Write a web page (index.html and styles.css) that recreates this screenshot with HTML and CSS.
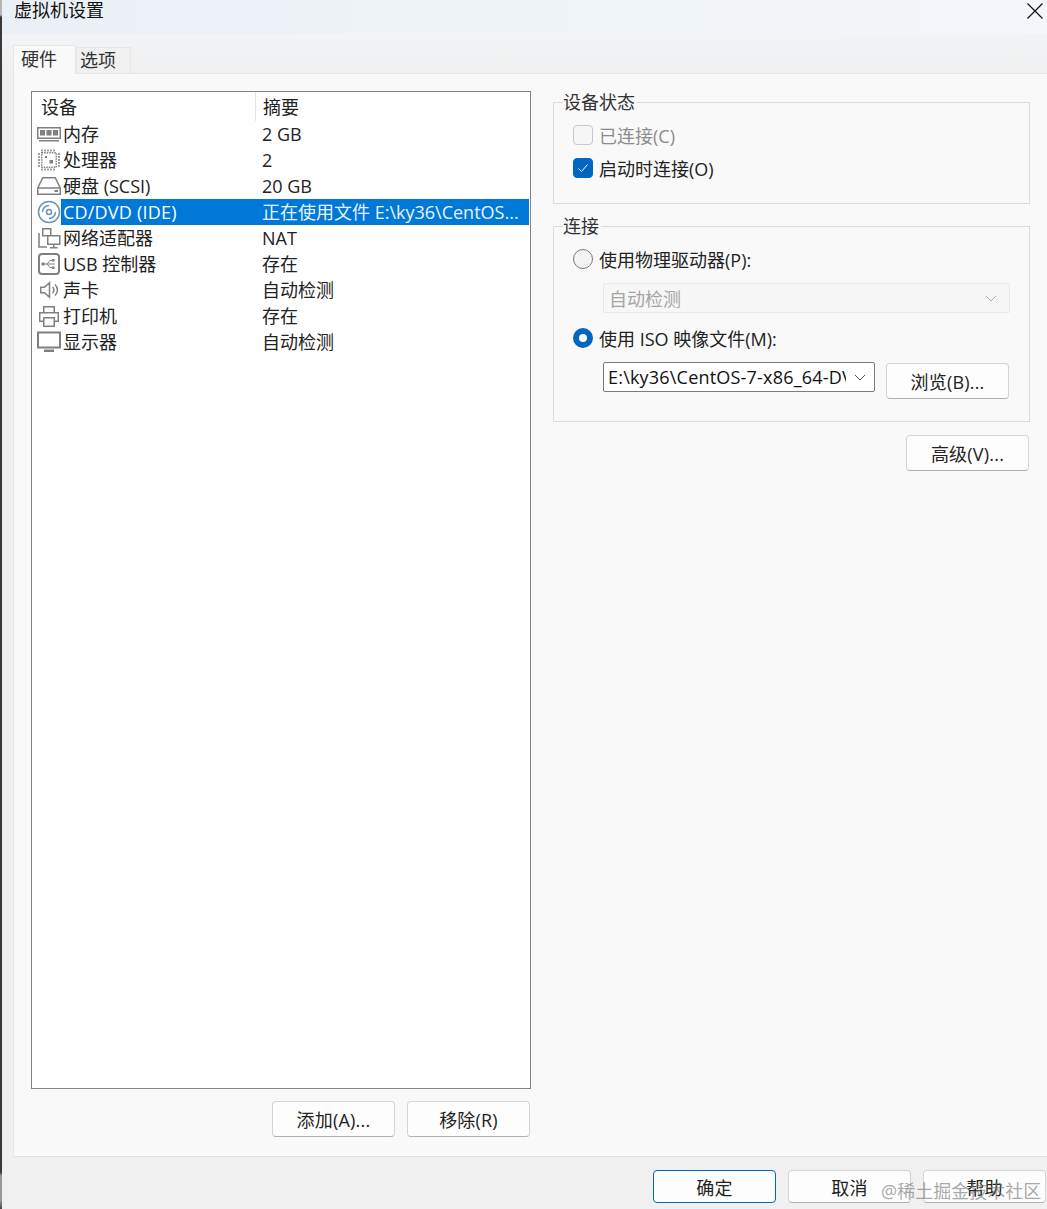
FILE: index.html
```html
<!DOCTYPE html>
<html lang="zh">
<head>
<meta charset="utf-8">
<title>虚拟机设置</title>
<link rel="stylesheet" href="styles.css">
</head>
<body>
<div class="edge"></div>
<div class="window">
  <header class="titlebar">
    <span class="title">虚拟机设置</span>
    <svg class="close" viewBox="0 0 16 16"><path d="M0.500 0.500L15.500 15.500M15.500 0.500L0.500 15.500"/></svg>
  </header>
  <div class="tabs">
    <div class="tab active">硬件</div>
    <div class="tab">选项</div>
  </div>
  <main class="panel">
    <section class="left">
      <div class="list">
        <div class="row head"><div class="c1 hcell">设备</div><div class="c2 hcell2">摘要</div></div>
        <div class="row">
          <svg class="ic" viewBox="0 0 24 24"><path class="s" d="M0.750 5.750h22.500v10.500H0.750zM2 18.750h20"/><path class="f" d="M3 8h5v5.500H3zM9.500 8h5v5.500h-5zM16 8h5v5.500h-5z"/></svg>
          <div class="c1">内存</div><div class="c2">2 GB</div>
        </div>
        <div class="row">
          <svg class="ic" viewBox="0 0 24 24"><path class="s d2" d="M4.750 4.750h14.500v14.500H4.750z"/><path class="d" d="M5 1.500v2M8 1.500v2M11 1.500v2M14 1.500v2M17 1.500v2M5 20.500v2M8 20.500v2M11 20.500v2M14 20.500v2M17 20.500v2M1 6h2M1 9h2M1 12h2M1 15h2M1 18h2M21 6h2M21 9h2M21 12h2M21 15h2M21 18h2"/><path class="f" d="M12.500 12h3.500v3.500h-3.500z"/><path class="f" d="M8 8h2v2H8z"/></svg>
          <div class="c1">处理器</div><div class="c2">2</div>
        </div>
        <div class="row">
          <svg class="ic" viewBox="0 0 24 24"><path class="s" d="M5.750 3.750h12.500L23.250 14v6.250H0.750V14zM0.750 14h22.500"/><path class="f" d="M17.500 16h3.500v2h-3.500z"/></svg>
          <div class="c1">硬盘 (SCSI)</div><div class="c2">20 GB</div>
        </div>
        <div class="row selected">
          <svg class="ic" viewBox="0 0 24 24"><circle class="sb" cx="12" cy="12" r="10.500"/><circle class="sb" cx="12" cy="12" r="2.500"/><path class="sb" d="M5.500 12a6.500 6.500 0 0 1 6.500-6.500M18.500 12a6.500 6.500 0 0 1-6.500 6.500"/></svg>
          <div class="c1"><span class="sel-name">CD/DVD (IDE)</span></div><div class="c2 sel-sum">正在使用文件 E:\ky36\CentOS...</div>
        </div>
        <div class="row">
          <svg class="ic" viewBox="0 0 24 24"><path class="s" d="M5.750 2.750h8v7h-8zM10.750 9.750h12v8.500h-12zM16.750 18.250v3M13 21.750h7.500"/><path class="d" d="M2 7v14h8"/></svg>
          <div class="c1">网络适配器</div><div class="c2">NAT</div>
        </div>
        <div class="row">
          <svg class="ic" viewBox="0 0 24 24"><rect class="s2" x="2" y="2" width="20" height="20" rx="3"/><path class="th" d="M7 12h11M10 12l3-3.500h2.500M10 12l3 3.500h2.500"/><path class="f" d="M4.500 10.500h3v3h-3zM15 7h2.500v2.500H15zM15 14.500h2.500V17H15z"/></svg>
          <div class="c1">USB 控制器</div><div class="c2">存在</div>
        </div>
        <div class="row">
          <svg class="ic" viewBox="0 0 24 24"><path class="s" d="M3.750 9.250h3.750l5-4.500v14.500l-5-4.500H3.750zM15.500 9a4 4 0 0 1 0 6M18 6.500a7.500 7.500 0 0 1 0 11"/></svg>
          <div class="c1">声卡</div><div class="c2">自动检测</div>
        </div>
        <div class="row">
          <svg class="ic" viewBox="0 0 24 24"><path class="s" d="M6.750 8.750V2.750h10.500v6M6.750 17.250H2.750v-8.500h18.500v8.500H17.250M6.750 13.750h10.500v8.500H6.750z"/></svg>
          <div class="c1">打印机</div><div class="c2">存在</div>
        </div>
        <div class="row">
          <svg class="ic" viewBox="0 0 24 24"><path class="s2" d="M1 2.500h22v15H1z"/><path class="f" d="M7 19.500h10V22H7z"/></svg>
          <div class="c1">显示器</div><div class="c2">自动检测</div>
        </div>
      </div>
      <div class="actions">
        <button class="btn">添加(A)...</button>
        <button class="btn">移除(R)</button>
      </div>
    </section>
    <section class="right">
      <fieldset class="group status">
        <legend>设备状态</legend>
        <div class="opt disabled"><span class="box"></span>已连接(C)</div>
        <div class="opt"><span class="box checked"><svg viewBox="0 0 18 18"><path d="M4.500 9.500l3 3 6-7"/></svg></span>启动时连接(O)</div>
      </fieldset>
      <fieldset class="group conn">
        <legend>连接</legend>
        <div class="opt"><span class="radio"></span>使用物理驱动器(P):</div>
        <div class="select off">自动检测<svg class="chev" viewBox="0 0 12 7"><path d="M1 1l5 5 5-5"/></svg></div>
        <div class="opt iso"><span class="radio on"></span>使用 ISO 映像文件(M):</div>
        <div class="isorow">
          <div class="select file"><span class="path">E:\ky36\CentOS-7-x86_64-DV</span><svg class="chev" viewBox="0 0 12 7"><path d="M1 1l5 5 5-5"/></svg></div>
          <button class="btn">浏览(B)...</button>
        </div>
      </fieldset>
      <div class="adv"><button class="btn">高级(V)...</button></div>
    </section>
  </main>
  <footer class="footer">
    <button class="btn primary">确定</button>
    <button class="btn">取消</button>
    <button class="btn">帮助</button>
  </footer>
</div>
<div class="watermark">@稀土掘金技术社区</div>
</body>
</html>
```
FILE: styles.css
```css
* { box-sizing: border-box; }
html, body { margin: 0; height: 100%; }
body {
  width: 1047px;
  height: 1209px;
  overflow: hidden;
  position: relative;
  font-family: "Open Sans", "Noto Sans CJK SC", sans-serif;
  font-size: 18px;
  color: #111;
  background: #f0f0f0;
}
.edge {
  position: absolute;
  left: 0;
  top: 0;
  width: 2px;
  height: 1209px;
  background: linear-gradient(#b5b5b5 0, #b5b5b5 15px, #3a3a3a 17px, #3a3a3a 1172px, #999 1176px, #999 1200px, #444 1209px);
}
.window { display: flex; flex-direction: column; height: 1209px; }
.titlebar {
  height: 34px;
  flex: none;
  display: flex;
  justify-content: space-between;
  align-items: flex-start;
  padding: 0 4px 0 14px;
  background: linear-gradient(90deg, #eaf0f5 0%, #eef3f8 50%, #f3f6fa 100%);
}
.title { font-size: 18px; line-height: 21px; color: #111; }
.close { width: 16px; height: 16px; margin-top: 3px; }
.close path { stroke: #111; stroke-width: 1.2; fill: none; }
.tabs {
  height: 39px;
  flex: none;
  display: flex;
  align-items: flex-end;
  padding: 0 0 0 13px;
  background: linear-gradient(#f1f3f5, #f0f0f0);
}
.tab {
  width: 55px;
  height: 26px;
  border: 1px solid #e6e6e6;
  border-bottom: 0;
  background: #f0f0f0;
  padding-left: 3px;
  font-size: 18px;
  line-height: 25px;
  color: #333;
}
.tab.active {
  width: 63px;
  height: 29px;
  background: #f9f9f9;
  padding-left: 7px;
  line-height: 26px;
  margin-bottom: -1px;
  position: relative;
  z-index: 1;
}
.panel {
  flex: 1;
  margin-left: 13px;
  display: flex;
  gap: 22px;
  padding: 17px 17px 0 17px;
  background: #f9f9f9;
  border-top: 1px solid #e6e6e6;
  border-left: 1px solid #e6e6e6;
  border-bottom: 1px solid #e2e2e2;
}
.left { width: 500px; flex: none; display: flex; flex-direction: column; }
.list {
  width: 500px;
  height: 998px;
  background: #fff;
  border: 1px solid #838383;
  padding: 0 1px;
}
.row { display: flex; align-items: center; height: 26px; position: relative; padding-left: 4px; }
.head { height: 29px; padding-left: 0; color: #333; }
.c1 { width: 194px; flex: none; padding-left: 2px; line-height: 26px; color: #222; white-space: nowrap; }
.c2 { flex: 1; line-height: 26px; padding-left: 7px; color: #222; white-space: nowrap; }
.hcell { width: 222px; padding-left: 8px; }
.hcell2 { border-left: 1px solid #e5e5e5; padding-left: 7px; height: 29px; line-height: 30px; }
.ic { width: 24px; height: 24px; flex: none; }
.s { fill: none; stroke: #808080; stroke-width: 1.500; }
.s2 { fill: none; stroke: #808080; stroke-width: 2; }
.th { fill: none; stroke: #808080; stroke-width: 1; }
.d2 { stroke-dasharray: 1.500 1; }
.sb { fill: none; stroke: #6b93b3; stroke-width: 1.500; }
.f { fill: #808080; }
.d { fill: none; stroke: #808080; stroke-width: 1.500; }
.selected .c1 { align-self: stretch; padding-left: 0; }
.sel-name { display: block; background: #0078d7; color: #fff; padding-left: 2px; height: 26px; letter-spacing: 0.2px; }
.sel-sum { background: #0078d7; color: #e8f3fc; align-self: stretch; }
.actions { display: flex; justify-content: flex-end; gap: 12px; margin-top: 12px; padding-right: 1px; }
.btn {
  width: 123px;
  height: 36px;
  padding: 0;
  background: #fdfdfd;
  border: 1px solid #d4d4d4;
  border-bottom-color: #b0b0b0;
  border-radius: 4px;
  font: inherit;
  letter-spacing: 0.2px;
  color: #222;
}
.right { width: 477px; flex: none; display: flex; flex-direction: column; }
.group {
  margin: 0;
  padding: 0 0 0 19px;
  border: 1px solid #dcdcdc;
  min-width: 0;
  position: relative;
}
.group legend {
  line-height: 20px;
  padding: 0 2px 0 0;
  margin-left: -10px;
  background: #f9f9f9;
  color: #333;
}
.status { height: 112px; margin-top: 1px; }
.conn { height: 206px; margin-top: 12px; }
.opt { display: flex; align-items: center; gap: 6px; height: 20px; margin-top: 13px; color: #222; }
.opt.disabled { color: #8c8c8c; }
.box { width: 20px; height: 20px; border: 1px solid #c8c8c8; border-radius: 4px; background: #f6f6f6; flex: none; }
.box.checked { background: #0067c0; border-color: #0067c0; }
.box svg { display: block; width: 18px; height: 18px; }
.box svg path { fill: none; stroke: #fff; stroke-width: 1; }
.radio { width: 20px; height: 20px; border: 1px solid #7a7a7a; border-radius: 50%; background: #f3f3f3; flex: none; }
.radio.on { border: 6px solid #0067c0; background: #fff; }
.select {
  margin-left: 30px;
  display: flex;
  align-items: center;
  justify-content: space-between;
  border-radius: 2px;
}
.select.off {
  width: 407px;
  height: 30px;
  margin-top: 14px;
  padding: 0 12px 0 5px;
  border: 1px solid #e8e8e8;
  background: #f7f7f7;
  color: #a5a5a5;
}
.chev { width: 12px; height: 7px; flex: none; }
.chev path { fill: none; stroke: #555; stroke-width: 1; }
.off .chev path { stroke: #aaa; }
.opt.iso { margin-top: 15px; }
.isorow { display: flex; align-items: flex-start; gap: 11px; margin-top: 14px; }
.select.file {
  width: 272px;
  height: 30px;
  padding: 0 8px 0 4px;
  background: #fff;
  border: 1px solid #7a7a7a;
  gap: 8px;
  color: #111;
}
.path { flex: 1; overflow: hidden; white-space: nowrap; letter-spacing: 0.2px; }
.isorow .btn { margin-top: 1px; }
.adv { display: flex; justify-content: flex-end; margin-top: 13px; padding-right: 1px; }
.footer {
  height: 52px;
  flex: none;
  display: flex;
  gap: 12px;
  justify-content: flex-end;
  padding: 13px 1px 6px 0;
  background: #f0f0f0;
}
.footer .btn { height: 33px; }
.btn.primary { border: 1.500px solid #0067c0; }
.watermark {
  position: absolute;
  left: 881px;
  top: 1179px;
  font-size: 18px;
  line-height: 24px;
  color: rgba(110, 110, 110, 0.6);
  white-space: nowrap;
}
```
